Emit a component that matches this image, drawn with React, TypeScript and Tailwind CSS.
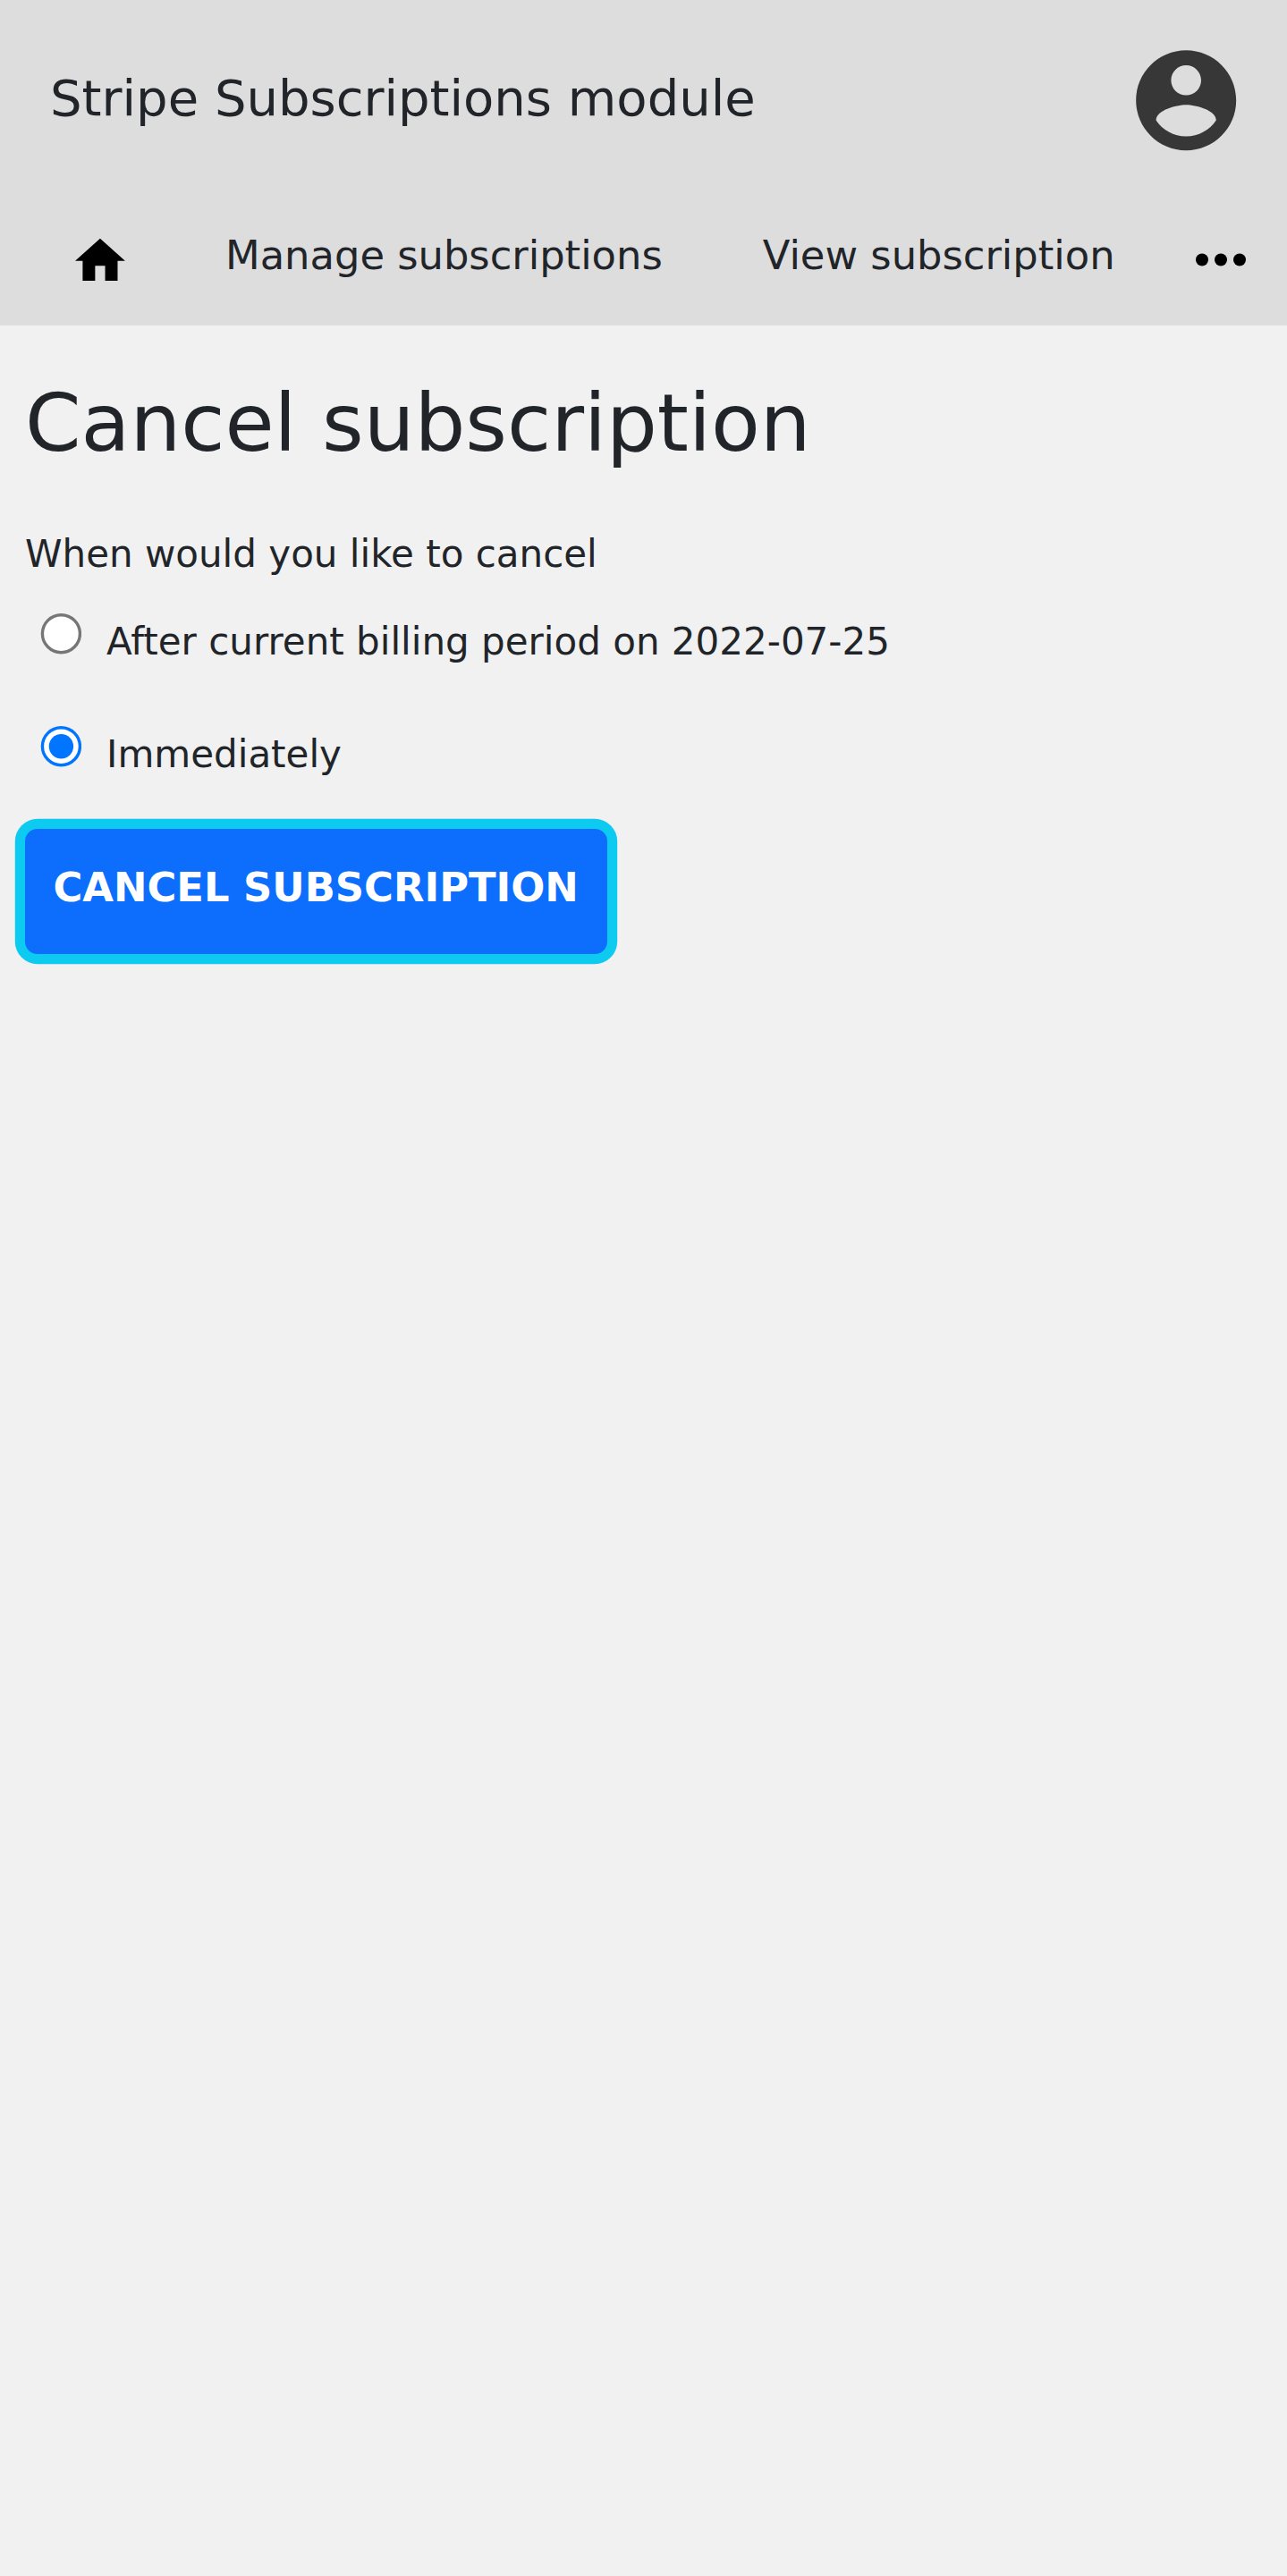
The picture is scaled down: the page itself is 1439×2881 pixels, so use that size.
import { useState } from "react";

const cancelOptions = [
  { id: "at_period_end", label: "After current billing period on 2022-07-25" },
  { id: "immediately", label: "Immediately" },
];

function AccountIcon() {
  return (
    <svg viewBox="0 0 24 24" className="h-[134.4px] w-[134.4px]" fill="#373737">
      <path d="M12 2C6.48 2 2 6.48 2 12s4.480 10 10 10 10-4.480 10-10S17.520 2 12 2zm0 3c1.660 0 3 1.340 3 3s-1.340 3-3 3-3-1.340-3-3 1.340-3 3-3zm0 14.200c-2.500 0-4.710-1.280-6-3.220.03-1.990 4-3.080 6-3.080 1.990 0 5.970 1.090 6 3.080-1.290 1.940-3.500 3.220-6 3.220z" />
    </svg>
  );
}

function HomeIcon() {
  return (
    <svg viewBox="0 0 24 24" className="h-[67px] w-[67px]">
      <path transform="translate(0.16 0.1)" d="M10 20v-6h4v6h5v-8h3L12 3 2 12h3v8z" />
    </svg>
  );
}

function MoreIcon() {
  return (
    <svg viewBox="0 0 24 24" className="h-[84px] w-[84px]">
      <circle cx="6" cy="11.85" r="2" />
      <circle cx="12" cy="11.85" r="2" />
      <circle cx="18" cy="11.85" r="2" />
    </svg>
  );
}

function RadioMark({ checked }: { checked: boolean }) {
  return (
    <svg viewBox="0 0 46 46" className="mt-[14px] ml-[17px] h-[46px] w-[46px] shrink-0">
      <circle cx="23.4" cy="22.7" r="21" fill="#fff" stroke={checked ? "#0075ff" : "#767676"} strokeWidth="3.4" />
      {checked && <circle cx="23.4" cy="22.7" r="13.7" fill="#0075ff" />}
    </svg>
  );
}

export default function App() {
  const [selected, setSelected] = useState("immediately");

  return (
    <div className="min-h-[2881px] w-full overflow-hidden bg-[#f1f1f1] font-['DejaVu_Sans',sans-serif] text-[#212529]">
      <header className="h-[364px] bg-[#dddddd]">
        <div className="flex h-[224px] items-center justify-between pr-[45.4px] pl-14">
          <span className="mb-1 text-[56px] leading-[84px]">Stripe Subscriptions module</span>
          <a href="#account" aria-label="Account">
            <AccountIcon />
          </a>
        </div>
        <nav className="flex h-[140px] items-start whitespace-nowrap text-[44.8px] leading-[67px]">
          <a href="#home" aria-label="Home" className="mt-[34px] ml-[78px]">
            <HomeIcon />
          </a>
          <a href="#manage" className="mt-7 ml-[107px]">Manage subscriptions</a>
          <a href="#view" className="mt-7 ml-[112px]">View subscription</a>
          <button aria-label="More" className="mt-[25px] mr-[32px] ml-auto">
            <MoreIcon />
          </button>
        </nav>
      </header>
      <main className="px-7">
        <h1 className="mt-[55px] text-[89.6px] leading-[108px]">Cancel subscription</h1>
        <form onSubmit={(e) => e.preventDefault()}>
          <p className="mt-[61px] text-[42px] leading-[63px]">When would you like to cancel</p>
          <div className="mt-[21px]">
            {cancelOptions.map((o) => (
              <label key={o.id} className="flex h-[126px] items-start">
                <input
                  type="radio"
                  name="when"
                  checked={selected === o.id}
                  onChange={() => setSelected(o.id)}
                  className="sr-only"
                />
                <RadioMark checked={selected === o.id} />
                <span className="mt-[14px] ml-[28px] text-[42px] leading-[63px]">{o.label}</span>
              </label>
            ))}
          </div>
          <button className="mt-[3.3px] flex h-[140px] w-[651px] rounded-[14px] bg-[#0d6efd] pt-[32px] pl-[31.4px] text-[44.8px] leading-[67px] font-bold whitespace-nowrap text-white shadow-[0_0_0_11.2px_#0dcaf0]">
            CANCEL SUBSCRIPTION
          </button>
        </form>
      </main>
    </div>
  );
}
